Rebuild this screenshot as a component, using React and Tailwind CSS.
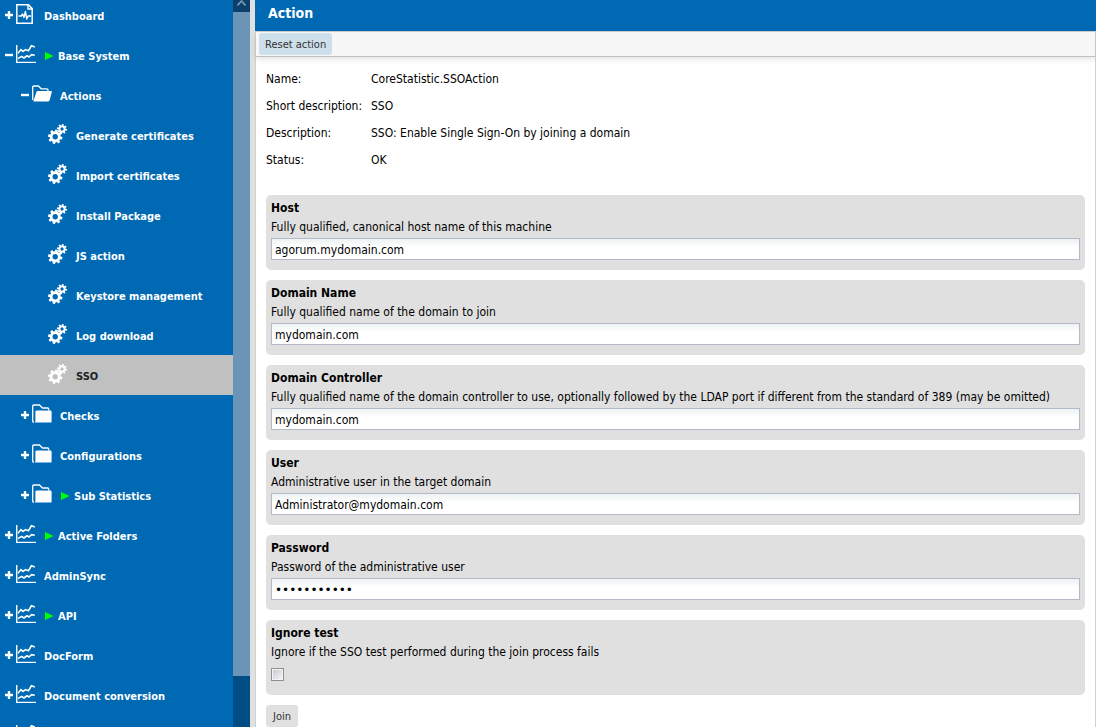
import React, { useState } from 'react';
import clsx from 'clsx';

const TREE = [
  { label: 'Dashboard', level: 1, toggle: 'plus', icon: 'dashboard' },
  { label: 'Base System', level: 1, toggle: 'minus', icon: 'chart', running: true },
  { label: 'Actions', level: 2, toggle: 'minus', icon: 'folderOpen' },
  { label: 'Generate certificates', level: 3, icon: 'gears' },
  { label: 'Import certificates', level: 3, icon: 'gears' },
  { label: 'Install Package', level: 3, icon: 'gears' },
  { label: 'JS action', level: 3, icon: 'gears' },
  { label: 'Keystore management', level: 3, icon: 'gears' },
  { label: 'Log download', level: 3, icon: 'gears' },
  { label: 'SSO', level: 3, icon: 'gears' },
  { label: 'Checks', level: 2, toggle: 'plus', icon: 'folder' },
  { label: 'Configurations', level: 2, toggle: 'plus', icon: 'folder' },
  { label: 'Sub Statistics', level: 2, toggle: 'plus', icon: 'folder', running: true },
  { label: 'Active Folders', level: 1, toggle: 'plus', icon: 'chart', running: true },
  { label: 'AdminSync', level: 1, toggle: 'plus', icon: 'chart' },
  { label: 'API', level: 1, toggle: 'plus', icon: 'chart', running: true },
  { label: 'DocForm', level: 1, toggle: 'plus', icon: 'chart' },
  { label: 'Document conversion', level: 1, toggle: 'plus', icon: 'chart' },
  { label: '', level: 1, toggle: 'plus', icon: 'chart' },
];

const INDENT = { 1: 'pl-[5px]', 2: 'pl-[21px]', 3: 'pl-[48px]' };

const DETAILS = [
  ['Name:', 'CoreStatistic.SSOAction'],
  ['Short description:', 'SSO'],
  ['Description:', 'SSO: Enable Single Sign-On by joining a domain'],
  ['Status:', 'OK'],
];

const FIELDS = [
  { id: 'host', title: 'Host', hint: 'Fully qualified, canonical host name of this machine', value: 'agorum.mydomain.com' },
  { id: 'domain', title: 'Domain Name', hint: 'Fully qualified name of the domain to join', value: 'mydomain.com' },
  {
    id: 'controller',
    title: 'Domain Controller',
    hint: 'Fully qualified name of the domain controller to use, optionally followed by the LDAP port if different from the standard of 389 (may be omitted)',
    value: 'mydomain.com',
  },
  { id: 'user', title: 'User', hint: 'Administrative user in the target domain', value: 'Administrator@mydomain.com' },
  { id: 'password', title: 'Password', hint: 'Password of the administrative user', value: 'secretvalue', type: 'password' },
];

// Outline of a cog wheel: each tooth is a small trapezoid
function cog(cx, cy, outer, inner, teeth) {
  const step = (Math.PI * 2) / teeth;
  const points = [];
  for (let i = 0; i < teeth; i++) {
    const a = (i + 0.25) * step;
    [[-0.32, inner], [-0.22, outer], [0.22, outer], [0.32, inner]].forEach(([o, r]) => {
      points.push(`${(cx + r * Math.cos(a + o * step)).toFixed(2)} ${(cy + r * Math.sin(a + o * step)).toFixed(2)}`);
    });
  }
  return `M${points.join('L')}Z`;
}

function hole(cx, cy, r) {
  return `M${cx - r} ${cy}a${r} ${r} 0 1 0 ${2 * r} 0a${r} ${r} 0 1 0 ${-2 * r} 0Z`;
}

const ICONS = {
  dashboard: (
    <g fill="none" stroke="currentColor">
      <path d="M.8 .8H12.4L16.2 4.6V19.2H.8Z" strokeWidth="1.5" />
      <path d="M12 .8V5H16.2" strokeWidth="1.4" />
      <path d="M2.5 12H5.2L6.6 10L8 13.4L9.4 7.4L10.8 15L12 12H15" strokeWidth="1.4" strokeLinejoin="round" />
    </g>
  ),
  chart: (
    <g fill="none" stroke="currentColor">
      <path d="M.7 1V18.4H20" strokeWidth="1.4" />
      <path d="M2 9.2L5 5.6L7 7.4L9.5 5.6L12.4 6.8L15.4 1.8L18.8 3" strokeWidth="1.6" />
      <path d="M2 14.6L5.5 12.4L8 14L11 11.8L13 13L15.5 10.6L18.8 11.2" strokeWidth="1.6" />
    </g>
  ),
  folder: (
    <g>
      <path d="M2 18.2Q.7 18.2 .7 17V2Q.7 1 2 1H7.4L10.5 4H15.6Q16.8 4 16.8 5.2V6.4" fill="none" stroke="currentColor" strokeWidth="1.3" />
      <path d="M5 6.4H18.4Q19.6 6.4 19.6 7.6V17.4Q19.6 18.6 18.4 18.6H2.6Q3.4 18 3.4 17V7.8Q3.4 6.4 5 6.4Z" fill="currentColor" />
    </g>
  ),
  folderOpen: (
    <g>
      <path d="M.7 16V3.2Q.7 2 2 2H6.4L9.2 4.8H14.8Q16 4.8 16 6V7" fill="none" stroke="currentColor" strokeWidth="1.3" />
      <path d="M5.8 7H19Q20.2 7 19.8 8.2L17.6 16.2Q17.2 17.6 15.8 17.6H2Q1.2 17.6 1.6 16.4L4.4 8Q4.8 7 5.8 7Z" fill="currentColor" />
    </g>
  ),
  gears: (
    <g fill="currentColor" fillRule="evenodd">
      <path d={cog(7.2, 12.8, 7.3, 5.5, 8) + hole(7.2, 12.8, 2.7)} />
      <path d={cog(14, 5, 5.1, 3.6, 8) + hole(14, 5, 1.7)} />
    </g>
  ),
};

function TreeRow({ node, selected, onSelect }) {
  return (
    <li className={clsx('flex h-10 shrink-0 items-center pb-[2px]', INDENT[node.level], selected ? 'bg-[#c0c0c0]' : 'text-white')}>
      {node.toggle && (
        <button type="button" aria-label={`Toggle ${node.label}`} className="mr-[3px] pt-[2px] text-white">
          <svg width="8" height="8" viewBox="0 0 8 8" className="block">
            <path d={node.toggle === 'plus' ? 'M0 4H8M4 0V8' : 'M0 4H8'} stroke="currentColor" strokeWidth="2.4" />
          </svg>
        </button>
      )}
      <a href="#" onClick={() => onSelect(node.label)} className="flex items-center">
        <svg width="20" height="20" viewBox="0 0 20 20" className="mr-2 block overflow-visible text-white">
          {ICONS[node.icon]}
        </svg>
        {node.running && (
          <svg width="14" height="12" viewBox="0 0 14 12" className="mt-1 block">
            <path d="M1 2L9.5 6L1 10Z" fill="#00ff00" />
          </svg>
        )}
        {node.label && (
          <span className={clsx('pt-[5px] text-[11px] leading-4 font-bold whitespace-nowrap', selected && 'text-[#222222]')}>{node.label}</span>
        )}
      </a>
    </li>
  );
}

function Sidebar() {
  const [current, setCurrent] = useState('SSO');

  return (
    <aside className="flex w-[250px] shrink-0 overflow-hidden bg-[#0069b4]">
      <ul className="-mt-[5px] flex flex-1 flex-col">
        {TREE.map((node) => (
          <TreeRow key={node.label} node={node} selected={node.label === current} onSelect={setCurrent} />
        ))}
      </ul>

      {/* Scrollbar */}
      <div className="flex w-[17px] flex-col bg-[#004d85]">
        <div className="flex h-3 justify-center bg-[#0b406c]">
          <svg width="9" height="7" viewBox="0 0 9 7">
            <path d="M.5 5.5L4.5 1L8.5 5.5" fill="none" stroke="#7f9db8" strokeWidth="1.6" />
          </svg>
        </div>
        <div className="h-[664px] bg-[#6b94b6]" />
      </div>
    </aside>
  );
}

function FieldCard({ id, title, hint, children }) {
  return (
    <section className="flex h-[75px] flex-col gap-[3px] rounded-[5px] bg-[#e0e0e0] p-[5px]">
      <label htmlFor={id} className="text-xs leading-4 font-bold">{title}</label>
      <p className="text-xs leading-4 whitespace-nowrap">{hint}</p>
      {children}
    </section>
  );
}

export default function App() {
  return (
    <div className="flex h-screen overflow-hidden bg-[#e0e0e0] font-['Tahoma','DejaVu_Sans_Condensed','DejaVu_Sans',sans-serif] text-black">
      <Sidebar />

      <main className="ml-[5px] flex min-w-0 flex-1 flex-col bg-white">
        <header className="flex h-[31px] shrink-0 items-center bg-[#0069b4] px-[13px] pb-[6px]">
          <h1 className="text-sm leading-5 font-bold text-white">Action</h1>
        </header>

        <div className="flex min-h-0 flex-1 flex-col border-x border-t border-[#d0d0d0]">
          <div className="flex h-[25px] shrink-0 items-center border-b border-[#c0c0c0] bg-[#f7f7f7] px-[3px] shadow-[0_2px_6px_rgba(0,0,0,0.12)]">
            <button type="button" className="h-[22px] rounded-[3px] bg-[#cddfea] px-[6px] pt-[2px] text-[11px] text-[#333333]">
              Reset action
            </button>
          </div>

          <div className="flex flex-1 flex-col overflow-hidden px-[10px] pt-[9px]">
            <dl className="mb-[21px] grid grid-cols-[105px_1fr] text-xs leading-[27px]">
              {DETAILS.map(([term, value]) => (
                <React.Fragment key={term}>
                  <dt className="whitespace-nowrap">{term}</dt>
                  <dd>{value}</dd>
                </React.Fragment>
              ))}
            </dl>

            <form className="flex flex-col gap-[10px]">
              {FIELDS.map((field) => (
                <FieldCard key={field.id} id={field.id} title={field.title} hint={field.hint}>
                  <input
                    id={field.id}
                    type={field.type || 'text'}
                    defaultValue={field.value}
                    className={clsx(
                      'h-[22px] w-full border border-[#b5b8c8] bg-white bg-linear-to-b from-[#edf2f2] to-white to-40% px-[3px] pt-px outline-none',
                      field.type === 'password' ? "font-['DejaVu_Sans'] text-xs" : 'text-xs'
                    )}
                  />
                </FieldCard>
              ))}

              <FieldCard id="ignore" title="Ignore test" hint="Ignore if the SSO test performed during the join process fails">
                <input
                  id="ignore"
                  type="checkbox"
                  className="mt-[5px] size-[13px] shrink-0 appearance-none border border-[#8e8f8f] bg-linear-to-br from-[#c5c9d2] to-[#f6f6f6] shadow-[inset_0_0_0_1px_#f4f4f4] checked:bg-[#0069b4]"
                />
              </FieldCard>

              <button type="button" className="h-[22px] self-start rounded-[3px] bg-[#e0e0e0] px-[7px] pt-[2px] text-[11px] text-[#333333]">
                Join
              </button>
            </form>
          </div>
        </div>
      </main>
    </div>
  );
}
